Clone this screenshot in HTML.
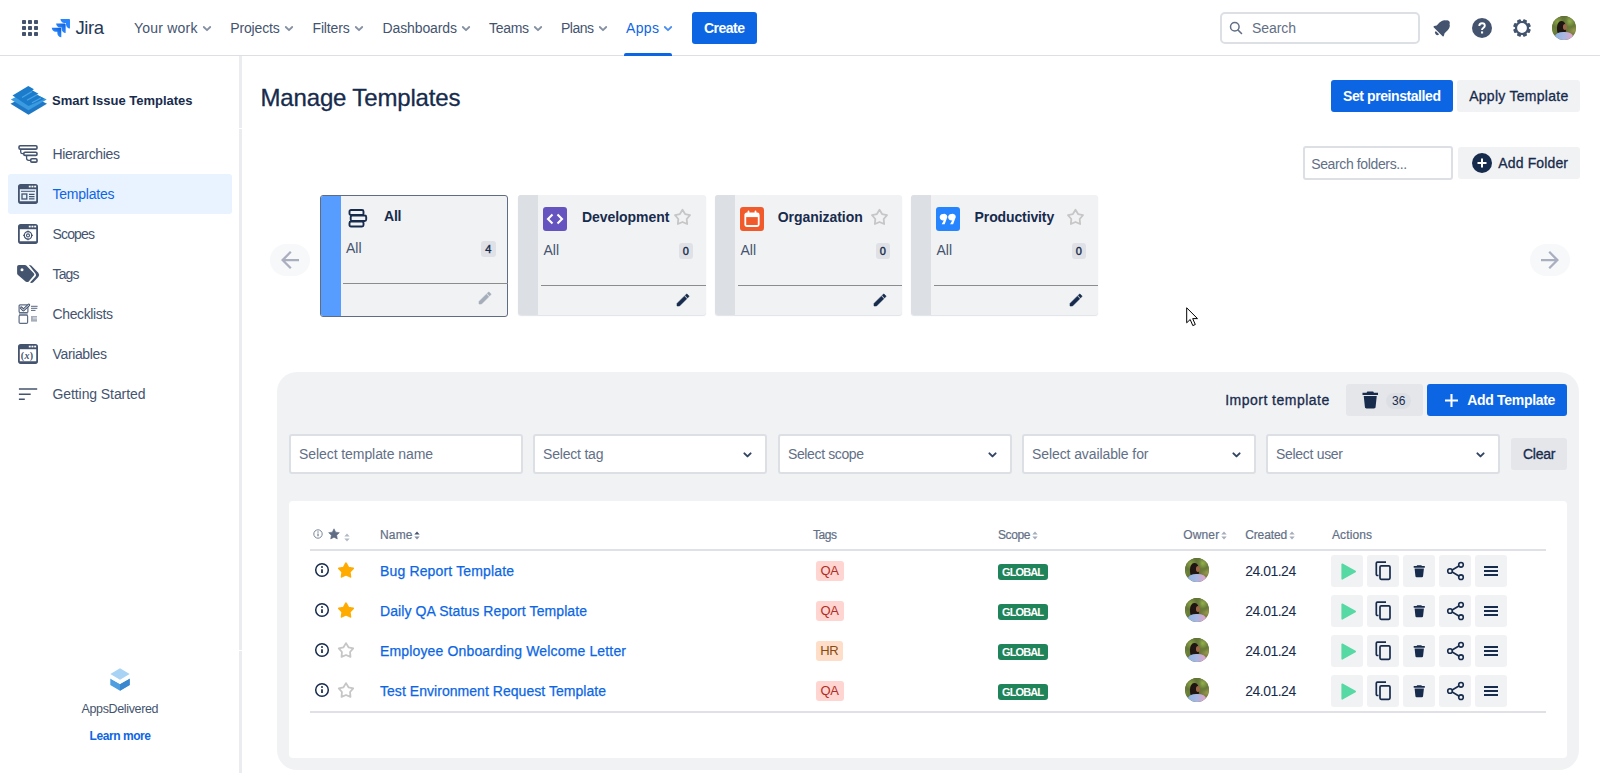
<!DOCTYPE html>
<html><head><meta charset="utf-8"><title>Manage Templates - Jira</title><style>
*{box-sizing:border-box;margin:0;padding:0}
html,body{width:1600px;height:773px;overflow:hidden;background:#fff}
body{font-family:"Liberation Sans",sans-serif;color:#172b4d;font-size:14px;position:relative}
.a{position:absolute}
.t{position:absolute;white-space:nowrap}
svg{position:absolute;overflow:visible}
#topnav{position:absolute;left:0;top:0;width:1600px;height:56px;border-bottom:1px solid #dcdfe4;background:#fff}
#sbline{position:absolute;left:239px;top:56px;width:3px;height:717px;background:#ebecf0}
#sel{position:absolute;left:8px;top:174px;width:224px;height:40px;background:#e9f2ff;border-radius:3px}
</style></head><body>
<div id="topnav"></div><svg style="left:22px;top:20px" width="16" height="16" viewBox="0 0 16 16"><rect x="0" y="0" width="4" height="4" rx="0.8" fill="#44546f"/><rect x="6" y="0" width="4" height="4" rx="0.8" fill="#44546f"/><rect x="12" y="0" width="4" height="4" rx="0.8" fill="#44546f"/><rect x="0" y="6" width="4" height="4" rx="0.8" fill="#44546f"/><rect x="6" y="6" width="4" height="4" rx="0.8" fill="#44546f"/><rect x="12" y="6" width="4" height="4" rx="0.8" fill="#44546f"/><rect x="0" y="12" width="4" height="4" rx="0.8" fill="#44546f"/><rect x="6" y="12" width="4" height="4" rx="0.8" fill="#44546f"/><rect x="12" y="12" width="4" height="4" rx="0.8" fill="#44546f"/></svg><svg style="left:51.200px;top:16.700px" width="20.800" height="20.800" viewBox="0 0 32 32"><defs><linearGradient id="jg" x1="1" y1="0" x2="0.400" y2="0.700"><stop offset="0.100" stop-color="#0f5fd6"/><stop offset="0.800" stop-color="#2684ff"/></linearGradient></defs>
<path d="M28.03 3.2H14.55c0 3.36 2.72 6.08 6.08 6.08h2.48v2.4c0 3.36 2.72 6.08 6.08 6.08V4.36c0-.64-.52-1.16-1.16-1.16z" fill="#2684ff"/>
<path d="M21.36 9.92H7.88c0 3.36 2.72 6.08 6.08 6.08h2.48v2.4c0 3.36 2.72 6.08 6.08 6.08V11.08c0-.64-.52-1.16-1.16-1.16z" fill="url(#jg)"/>
<path d="M14.68 16.63H1.2c0 3.36 2.72 6.08 6.08 6.08h2.49v2.4c0 3.35 2.72 6.07 6.07 6.08V17.79c0-.64-.52-1.16-1.16-1.16z" fill="url(#jg)"/></svg><div class="t" style="left:75.5px;top:15px;font-size:18.5px;line-height:25px;font-weight:normal;color:#253858;letter-spacing:-0.438px;">Jira</div><div class="t" style="left:134px;top:18px;font-size:14px;line-height:20px;font-weight:normal;color:#44546f;letter-spacing:0.219px;">Your work</div><svg style="left:202.5px;top:25.5px" width="8" height="6" viewBox="0 0 8 6"><path d="M0.8 1 L4 4.2 L7.2 1" fill="none" stroke="#8590a2" stroke-width="1.8" stroke-linecap="round" stroke-linejoin="round"/></svg><div class="t" style="left:230.3px;top:18px;font-size:14px;line-height:20px;font-weight:normal;color:#44546f;letter-spacing:-0.154px;">Projects</div><svg style="left:284.8px;top:25.5px" width="8" height="6" viewBox="0 0 8 6"><path d="M0.8 1 L4 4.2 L7.2 1" fill="none" stroke="#8590a2" stroke-width="1.8" stroke-linecap="round" stroke-linejoin="round"/></svg><div class="t" style="left:312.5px;top:18px;font-size:14px;line-height:20px;font-weight:normal;color:#44546f;letter-spacing:-0.154px;">Filters</div><svg style="left:354.7px;top:25.5px" width="8" height="6" viewBox="0 0 8 6"><path d="M0.8 1 L4 4.2 L7.2 1" fill="none" stroke="#8590a2" stroke-width="1.8" stroke-linecap="round" stroke-linejoin="round"/></svg><div class="t" style="left:382.5px;top:18px;font-size:14px;line-height:20px;font-weight:normal;color:#44546f;letter-spacing:-0.111px;">Dashboards</div><svg style="left:462.0px;top:25.5px" width="8" height="6" viewBox="0 0 8 6"><path d="M0.8 1 L4 4.2 L7.2 1" fill="none" stroke="#8590a2" stroke-width="1.8" stroke-linecap="round" stroke-linejoin="round"/></svg><div class="t" style="left:489px;top:18px;font-size:14px;line-height:20px;font-weight:normal;color:#44546f;letter-spacing:-0.309px;">Teams</div><svg style="left:534px;top:25.5px" width="8" height="6" viewBox="0 0 8 6"><path d="M0.8 1 L4 4.2 L7.2 1" fill="none" stroke="#8590a2" stroke-width="1.8" stroke-linecap="round" stroke-linejoin="round"/></svg><div class="t" style="left:561px;top:18px;font-size:14px;line-height:20px;font-weight:normal;color:#44546f;letter-spacing:-0.508px;">Plans</div><svg style="left:599px;top:25.5px" width="8" height="6" viewBox="0 0 8 6"><path d="M0.8 1 L4 4.2 L7.2 1" fill="none" stroke="#8590a2" stroke-width="1.8" stroke-linecap="round" stroke-linejoin="round"/></svg><div class="t" style="left:626px;top:18px;font-size:14px;line-height:20px;font-weight:normal;color:#0c66e4;letter-spacing:0.359px;">Apps</div><svg style="left:664px;top:25.5px" width="8" height="6" viewBox="0 0 8 6"><path d="M0.8 1 L4 4.2 L7.2 1" fill="none" stroke="#4c8ff0" stroke-width="1.8" stroke-linecap="round" stroke-linejoin="round"/></svg><div class="a" style="left:624px;top:53px;width:48px;height:3px;background:#0c66e4;border-radius:2px 2px 0 0"></div><div class="a" style="left:692px;top:12px;width:65px;height:32px;background:#0c66e4;border-radius:3px"></div><div class="t" style="left:704px;top:18px;font-size:14px;line-height:20px;font-weight:bold;color:#fff;letter-spacing:-0.519px;">Create</div><div class="a" style="left:1220px;top:12px;width:200px;height:32px;border:2px solid #dcdfe4;border-radius:5px;background:#fff"></div><svg style="left:1229px;top:21px" width="14" height="14" viewBox="0 0 14 14"><circle cx="5.8" cy="5.8" r="4.3" fill="none" stroke="#626f86" stroke-width="1.5"/><path d="M9 9 L12.5 12.5" stroke="#626f86" stroke-width="1.6" stroke-linecap="round"/></svg><div class="t" style="left:1252px;top:18px;font-size:14px;line-height:20px;font-weight:normal;color:#626f86;letter-spacing:-0.072px;">Search</div><svg style="left:1432px;top:18px" width="20" height="20" viewBox="-10 -10 20 20"><g transform="translate(0.4 -0.4) rotate(45)" fill="#44546f"><path d="M0 -9.300C-1.300 -9.300 -2.200 -8.600 -2.500 -7.600C-4.700 -6.600 -5.600 -4.300 -5.600 -1.500V2.500L-6.900 4.800C-7.200 5.400 -6.900 5.900 -6.200 5.900H6.200C6.900 5.900 7.200 5.400 6.900 4.800L5.600 2.500V-1.500C5.600 -4.300 4.700 -6.600 2.500 -7.600C2.200 -8.600 1.300 -9.300 0 -9.300Z"/><path d="M-2.400 7.100H2.400A2.400 2.400 0 0 1 -2.400 7.100Z"/></g></svg><div class="a" style="left:1472px;top:18px;width:20px;height:20px;border-radius:50%;background:#44546f"></div><svg style="left:1472px;top:18px" width="20" height="20" viewBox="0 0 20 20"><path d="M7.300 8.100C7.300 6.300 8.500 5.300 10.100 5.300C11.700 5.300 12.800 6.300 12.800 7.700C12.800 9.700 10 9.700 10 12.100" fill="none" stroke="#fff" stroke-width="1.900"/><rect x="9" y="13.400" width="2.100" height="2.100" fill="#fff"/></svg><svg style="left:1511.600px;top:17.600px" width="20" height="20" viewBox="-10 -10 20 20"><circle r="6" fill="none" stroke="#44546f" stroke-width="2.200"/><rect x="-2" y="-8.900" width="4" height="3.400" rx="0.800" transform="rotate(22.5)" fill="#44546f"/><rect x="-2" y="-8.900" width="4" height="3.400" rx="0.800" transform="rotate(67.5)" fill="#44546f"/><rect x="-2" y="-8.900" width="4" height="3.400" rx="0.800" transform="rotate(112.5)" fill="#44546f"/><rect x="-2" y="-8.900" width="4" height="3.400" rx="0.800" transform="rotate(157.5)" fill="#44546f"/><rect x="-2" y="-8.900" width="4" height="3.400" rx="0.800" transform="rotate(202.5)" fill="#44546f"/><rect x="-2" y="-8.900" width="4" height="3.400" rx="0.800" transform="rotate(247.5)" fill="#44546f"/><rect x="-2" y="-8.900" width="4" height="3.400" rx="0.800" transform="rotate(292.5)" fill="#44546f"/><rect x="-2" y="-8.900" width="4" height="3.400" rx="0.800" transform="rotate(337.5)" fill="#44546f"/></svg><div class="a" style="left:1552px;top:16px;width:24px;height:24px;border-radius:50%;overflow:hidden;background:#626b38">
<div class="a" style="left:0;top:0;width:100%;height:100%;background:radial-gradient(circle at 24% 24%,#8aa544 0,#66783a 22%,transparent 42%),radial-gradient(circle at 74% 22%,#93b04c 0,#667a38 22%,transparent 42%),radial-gradient(circle at 90% 56%,#a3a24e 0,transparent 30%),radial-gradient(circle at 8% 58%,#6f8c3a 0,transparent 28%),radial-gradient(circle at 50% 6%,#3f4727 0,transparent 26%)"></div>
<div class="a" style="left:21%;top:22%;width:38%;height:60%;border-radius:45%;background:#1f1513"></div>
<div class="a" style="left:46%;top:32%;width:18%;height:25%;border-radius:50%;background:#9a664a"></div>
<div class="a" style="left:12%;top:68%;width:76%;height:40%;border-radius:45% 45% 0 0;background:linear-gradient(90deg,#8db4e6 0,#a9b6e2 50%,#dca6cd 90%)"></div>
</div><div id="sbline"></div><div class="a" style="left:239px;top:128px;width:3px;height:1px;background:#fff"></div><div class="a" style="left:239px;top:650px;width:3px;height:1px;background:#fff"></div><div id="sel"></div><svg style="left:10px;top:85px" width="38" height="31" viewBox="0 0 38 31">
<path d="M0.500 18.800L18.500 9.500L37 18.800L18.500 29.700Z" fill="#1f78c6"/>
<path d="M0.800 14.600L18.500 5.500L36.700 14.600L18.500 25.300Z" fill="#3a9be0"/>
<path d="M2.500 10.500L18.300 1.100L24 4.300L22.200 5.300L28.500 8.700L26.700 9.700L34.500 13.700L33 14.600L18.500 21Z" fill="#1c7ccc"/>
<path d="M12 12.500L22 6.500M17 15.200L27 9.800M22 17.800L31 13" stroke="#4aa3e6" stroke-width="1.300" fill="none"/>
</svg><div class="t" style="left:52px;top:91px;font-size:13px;line-height:19px;font-weight:bold;color:#172b4d;letter-spacing:-0.008px;">Smart Issue Templates</div><svg style="left:18px;top:144px" width="20" height="20" viewBox="0 0 20 20" fill="none" stroke="#44546f" stroke-width="1.600">
<rect x="1" y="1.700" width="18" height="3.400" rx="1.200"/><rect x="5.800" y="8.200" width="13.200" height="3.200" rx="1.200"/><rect x="12.700" y="14.700" width="6.300" height="3.400" rx="1.200"/>
<path d="M2.700 5.500V8Q2.700 9.700 4.500 9.700H5.800M8.600 12V14.300Q8.600 16.300 10.800 16.300H12.700" stroke-width="1.300"/></svg><svg style="left:18px;top:184px" width="20" height="20" viewBox="0 0 20 20"><rect x="0.900" y="0.900" width="18.200" height="18.200" rx="1.800" fill="none" stroke="#44546f" stroke-width="1.800"/><rect x="0.900" y="0.900" width="18.200" height="4.300" fill="#44546f"/><rect x="0.900" y="17.300" width="18.200" height="2" rx="0.800" fill="#44546f"/><rect x="10.800" y="1.700" width="1.900" height="1.700" fill="#fff"/><rect x="13.500" y="1.700" width="1.900" height="1.700" fill="#fff"/><rect x="16.200" y="1.700" width="1.900" height="1.700" fill="#fff"/><path d="M3 7.300H17" stroke="#44546f" stroke-width="1"/><rect x="4" y="10" width="4.800" height="5" fill="none" stroke="#44546f" stroke-width="1.300"/><path d="M11 10.300H16.500M11 12.600H16.500M11 14.900H16.500" stroke="#44546f" stroke-width="1.200"/></svg><svg style="left:18px;top:224px" width="20" height="20" viewBox="0 0 20 20"><rect x="0.900" y="0.900" width="18.200" height="18.200" rx="1.800" fill="none" stroke="#44546f" stroke-width="1.800"/><rect x="0.900" y="0.900" width="18.200" height="4.300" fill="#44546f"/><rect x="0.900" y="17.300" width="18.200" height="2" rx="0.800" fill="#44546f"/><rect x="10.800" y="1.700" width="1.900" height="1.700" fill="#fff"/><rect x="13.500" y="1.700" width="1.900" height="1.700" fill="#fff"/><rect x="16.200" y="1.700" width="1.900" height="1.700" fill="#fff"/><circle cx="10" cy="11.400" r="3.700" fill="none" stroke="#44546f" stroke-width="1.200"/><circle cx="10" cy="11.400" r="1.500" fill="none" stroke="#44546f" stroke-width="1.100"/><path d="M10 6.600V8.200M10 14.600V16.200M5.200 11.400H6.800M13.200 11.400H14.800" stroke="#44546f" stroke-width="1.100"/></svg><svg style="left:16px;top:264px" width="24" height="20" viewBox="0 0 24 20"><path d="M12.800 0.800L15.200 1.500L22.300 8.800Q24 10.900 22.300 13L17.300 18.200Q15.800 19.600 14 18.500L19.500 12.400Q20.700 11 19.500 9.600Z" fill="#44546f"/><polygon points="2.900,2.700 9,2.700 16.500,10.400 11.400,16.200 10.700,16.200 2.900,9.300" fill="#44546f" stroke="#44546f" stroke-width="3.600" stroke-linejoin="round"/><circle cx="6" cy="5.700" r="1.500" fill="#fff"/></svg><svg style="left:18px;top:304px" width="20" height="20" viewBox="0 0 20 20" fill="none"><rect x="1" y="8.500" width="8.700" height="2.600" fill="#a5adba"/><rect x="1.100" y="0.900" width="8.800" height="7.600" rx="1" stroke="#5e6c84" stroke-width="1.200"/><rect x="1.100" y="11.100" width="8.500" height="8.300" rx="1.200" stroke="#5e6c84" stroke-width="1.200"/><path d="M3.200 3.800L5.400 6L10.800 1" stroke="#44546f" stroke-width="2.800" stroke-linecap="round" stroke-linejoin="round"/><path d="M3.200 3.800L5.400 6L10.800 1" stroke="#fff" stroke-width="0.900" stroke-linecap="round" stroke-linejoin="round"/><path d="M13 2.300H19.600M13 4.300H19.300M13 6.400H17.500" stroke="#44546f" stroke-width="0.900"/><rect x="13" y="12" width="6" height="5.600" fill="#a5adba"/><rect x="14.800" y="13" width="4.200" height="2.400" fill="#c7ccd5"/></svg><svg style="left:18px;top:344px" width="20" height="20" viewBox="0 0 20 20"><rect x="0.900" y="0.900" width="18.200" height="18.200" rx="1.800" fill="none" stroke="#44546f" stroke-width="1.800"/><rect x="0.900" y="0.900" width="18.200" height="4.300" fill="#44546f"/><rect x="0.900" y="17.300" width="18.200" height="2" rx="0.800" fill="#44546f"/><rect x="10.800" y="1.700" width="1.900" height="1.700" fill="#fff"/><rect x="13.500" y="1.700" width="1.900" height="1.700" fill="#fff"/><rect x="16.200" y="1.700" width="1.900" height="1.700" fill="#fff"/></svg><div class="t" style="left:20.8px;top:348px;font-size:10px;line-height:15px;font-weight:bold;color:#44546f;letter-spacing:0.25px;font-family:'Liberation Serif',serif;">(<i>x</i>)</div><svg style="left:18px;top:384px" width="20" height="20" viewBox="0 0 20 20"><path d="M0.900 5H19.200M0.900 10.300H12.700M0.900 15.300H6.800" stroke="#44546f" stroke-width="1.600"/></svg><div class="t" style="left:52.5px;top:144px;font-size:14px;line-height:20px;font-weight:normal;color:#44546f;letter-spacing:-0.331px;">Hierarchies</div><div class="t" style="left:52.5px;top:184px;font-size:14px;line-height:20px;font-weight:normal;color:#0c66e4;letter-spacing:-0.227px;">Templates</div><div class="t" style="left:52.5px;top:224px;font-size:14px;line-height:20px;font-weight:normal;color:#44546f;letter-spacing:-0.841px;">Scopes</div><div class="t" style="left:52.5px;top:264px;font-size:14px;line-height:20px;font-weight:normal;color:#44546f;letter-spacing:-0.859px;">Tags</div><div class="t" style="left:52.5px;top:304px;font-size:14px;line-height:20px;font-weight:normal;color:#44546f;letter-spacing:-0.366px;">Checklists</div><div class="t" style="left:52.5px;top:344px;font-size:14px;line-height:20px;font-weight:normal;color:#44546f;letter-spacing:-0.354px;">Variables</div><div class="t" style="left:52.5px;top:384px;font-size:14px;line-height:20px;font-weight:normal;color:#44546f;letter-spacing:-0.084px;">Getting Started</div><svg style="left:110px;top:668px" width="20" height="23" viewBox="0 0 20 23"><path d="M0.300 6L10 0.300L19.700 6L10 11.700Z" fill="#a9d3f5"/><path d="M0.300 10.500L10 16L19.700 10.500V17L10 22.700L0.300 17Z" fill="#4f9fe0"/><path d="M10 16L19.700 10.500V17L10 22.700Z" fill="#3a86cf"/><path d="M0.300 8.200L10 13.800L19.700 8.200V10.500L10 16L0.300 10.500Z" fill="#fff"/></svg><div class="t" style="left:81.5px;top:700px;font-size:12.5px;line-height:18px;font-weight:normal;color:#44546f;letter-spacing:-0.358px;">AppsDelivered</div><div class="t" style="left:89.5px;top:727px;font-size:12px;line-height:18px;font-weight:bold;color:#0c66e4;letter-spacing:-0.429px;">Learn more</div><div class="t" style="left:260.5px;top:82px;font-size:24px;line-height:31px;font-weight:normal;color:#172b4d;letter-spacing:-0.157px;-webkit-text-stroke:0.300px #172b4d;">Manage Templates</div><div class="a" style="left:1331px;top:80px;width:122px;height:32px;background:#0c66e4;border-radius:3px"></div><div class="t" style="left:1343px;top:86px;font-size:14px;line-height:20px;font-weight:bold;color:#fff;letter-spacing:-0.418px;">Set preinstalled</div><div class="a" style="left:1457px;top:80px;width:123px;height:32px;background:#f1f2f4;border-radius:3px"></div><div class="t" style="left:1469.2px;top:86px;font-size:14px;line-height:20px;font-weight:normal;color:#172b4d;letter-spacing:0.272px;-webkit-text-stroke:0.300px #172b4d;">Apply Template</div><div class="a" style="left:1303px;top:146px;width:150px;height:34px;border:2px solid #dcdfe4;border-radius:3px;background:#fff"></div><div class="t" style="left:1311.2px;top:154px;font-size:14px;line-height:20px;font-weight:normal;color:#626f86;letter-spacing:-0.371px;">Search folders...</div><div class="a" style="left:1458px;top:147px;width:122px;height:32px;background:#f1f2f4;border-radius:3px"></div><svg style="left:1471.800px;top:153px" width="20" height="20" viewBox="0 0 20 20"><circle cx="10" cy="10" r="10" fill="#172b4d"/><path d="M10 5.500V14.500M5.500 10H14.500" stroke="#fff" stroke-width="2"/></svg><div class="t" style="left:1498.3px;top:153px;font-size:14px;line-height:20px;font-weight:normal;color:#172b4d;letter-spacing:0.135px;-webkit-text-stroke:0.300px #172b4d;">Add Folder</div><div class="a" style="left:270px;top:244px;width:40px;height:32px;border-radius:16px;background:#f7f8f9"></div><svg style="left:281px;top:251px" width="18" height="18" viewBox="4 4 16 16"><path d="M20 11H7.830l5.590-5.590L12 4l-8 8 8 8 1.410-1.410L7.830 13H20v-2z" fill="#a9afbf"/></svg><div class="a" style="left:1530px;top:244px;width:40px;height:32px;border-radius:16px;background:#f7f8f9"></div><svg style="left:1541px;top:251px" width="18" height="18" viewBox="4 4 16 16"><path d="M12 4l-1.410 1.410L16.170 11H4v2h12.170l-5.580 5.590L12 20l8-8z" fill="#a9afbf"/></svg><div class="a" style="left:320px;top:195px;width:188px;height:122px;background:#f1f2f4;border:1px solid #5e6c84;border-radius:3px;overflow:hidden"><div class="a" style="left:0;top:0;width:20px;height:100%;background:#579dff"></div></div><svg style="left:348px;top:208.500px" width="20" height="19" viewBox="0 0 20 19" fill="none" stroke="#172b4d" stroke-width="1.900"><rect x="1.500" y="1" width="14" height="5" rx="1.500"/><rect x="2.700" y="6.500" width="15.500" height="5.500" rx="1.500"/><rect x="1.500" y="12.500" width="14" height="5" rx="1.500"/></svg><div class="t" style="left:384px;top:206px;font-size:14px;line-height:20px;font-weight:bold;color:#172b4d;letter-spacing:-0.195px;">All</div><div class="t" style="left:346px;top:238px;font-size:14px;line-height:20px;font-weight:normal;color:#44546f;letter-spacing:-0.031px;">All</div><div class="a" style="left:481px;top:241px;width:15px;height:15.500px;background:#dfe1e6;border-radius:3px"></div><div class="t" style="left:485.3px;top:241px;font-size:11px;line-height:16px;font-weight:normal;color:#172b4d;letter-spacing:0px;-webkit-text-stroke:0.400px #172b4d;">4</div><div class="a" style="left:343px;top:283.300px;width:165px;height:1px;background:#8c8c8c"></div><svg style="left:479.3px;top:292px" width="12" height="12" viewBox="3 3 18 18"><path d="M3 17.250V21h3.750L17.810 9.940l-3.750-3.750L3 17.250zM20.710 7.040c.390-.390.390-1.020 0-1.410l-2.340-2.340c-.390-.390-1.020-.390-1.410 0L15.130 5.120l3.750 3.750 1.830-1.830z" fill="#a5adba" stroke="#a5adba" stroke-width="0.800"/></svg><div class="a" style="left:518px;top:195px;width:187.5px;height:120px;background:#f1f2f4;border-radius:3px;box-shadow:0 1px 1px rgba(9,30,66,0.13);overflow:hidden"><div class="a" style="left:0;top:0;width:20px;height:100%;background:#dcdfe4"></div></div><div class="a" style="left:543px;top:206.700px;width:24px;height:24px;background:#6554c0;border-radius:3px"></div><svg style="left:543px;top:206.700px" width="24" height="24" viewBox="0 0 24 24"><path d="M9.500 7.500L5 12L9.500 16.500M14.500 7.500L19 12L14.500 16.500" fill="none" stroke="#fff" stroke-width="2.100"/></svg><div class="t" style="left:582px;top:207px;font-size:14px;line-height:20px;font-weight:bold;color:#172b4d;letter-spacing:-0.062px;">Development</div><svg style="left:674.4px;top:208.300px" width="18" height="18" viewBox="0 0 18 18"><polygon points="8.50,1.70 11.10,6.02 16.01,7.16 12.71,10.97 13.14,15.99 8.50,14.02 3.86,15.99 4.29,10.97 0.99,7.16 5.90,6.02" fill="none" stroke="#c6c6c6" stroke-width="1.8" stroke-linejoin="round"/></svg><div class="t" style="left:543.5px;top:240px;font-size:14px;line-height:20px;font-weight:normal;color:#44546f;letter-spacing:-0.031px;">All</div><div class="a" style="left:679px;top:243px;width:14px;height:15.500px;background:#dfe1e6;border-radius:3px"></div><div class="t" style="left:682.8px;top:243px;font-size:11px;line-height:16px;font-weight:normal;color:#172b4d;letter-spacing:0px;-webkit-text-stroke:0.400px #172b4d;">0</div><div class="a" style="left:541px;top:285px;width:164.5px;height:1px;background:#8c8c8c"></div><svg style="left:676.9px;top:294.3px" width="12" height="12" viewBox="3 3 18 18"><path d="M3 17.250V21h3.750L17.810 9.940l-3.750-3.750L3 17.250zM20.710 7.040c.390-.390.390-1.020 0-1.410l-2.340-2.340c-.390-.390-1.020-.390-1.410 0L15.130 5.120l3.750 3.750 1.830-1.830z" fill="#172b4d" stroke="#172b4d" stroke-width="0.800"/></svg><div class="a" style="left:715px;top:195px;width:186.5px;height:120px;background:#f1f2f4;border-radius:3px;box-shadow:0 1px 1px rgba(9,30,66,0.13);overflow:hidden"><div class="a" style="left:0;top:0;width:20px;height:100%;background:#dcdfe4"></div></div><div class="a" style="left:740px;top:206.700px;width:24px;height:24px;background:#f15a2b;border-radius:3px"></div><svg style="left:740px;top:206.700px" width="24" height="24" viewBox="0 0 24 24"><rect x="5.300" y="6.500" width="13.400" height="12.500" rx="1.500" fill="none" stroke="#fff" stroke-width="1.800"/><rect x="5.300" y="6.500" width="13.400" height="3.600" fill="#fff"/><path d="M8.500 4.500V7M15.500 4.500V7" stroke="#fff" stroke-width="1.800" stroke-linecap="round"/></svg><div class="t" style="left:777.7px;top:207px;font-size:14px;line-height:20px;font-weight:bold;color:#172b4d;letter-spacing:-0.051px;">Organization</div><svg style="left:870.5px;top:208.300px" width="18" height="18" viewBox="0 0 18 18"><polygon points="8.50,1.70 11.10,6.02 16.01,7.16 12.71,10.97 13.14,15.99 8.50,14.02 3.86,15.99 4.29,10.97 0.99,7.16 5.90,6.02" fill="none" stroke="#c6c6c6" stroke-width="1.8" stroke-linejoin="round"/></svg><div class="t" style="left:740.5px;top:240px;font-size:14px;line-height:20px;font-weight:normal;color:#44546f;letter-spacing:-0.031px;">All</div><div class="a" style="left:876px;top:243px;width:14px;height:15.500px;background:#dfe1e6;border-radius:3px"></div><div class="t" style="left:879.8px;top:243px;font-size:11px;line-height:16px;font-weight:normal;color:#172b4d;letter-spacing:0px;-webkit-text-stroke:0.400px #172b4d;">0</div><div class="a" style="left:738px;top:285px;width:163.5px;height:1px;background:#8c8c8c"></div><svg style="left:873.9px;top:294.3px" width="12" height="12" viewBox="3 3 18 18"><path d="M3 17.250V21h3.750L17.810 9.940l-3.750-3.750L3 17.250zM20.710 7.040c.390-.390.390-1.020 0-1.410l-2.340-2.340c-.390-.390-1.020-.390-1.410 0L15.130 5.120l3.750 3.750 1.830-1.830z" fill="#172b4d" stroke="#172b4d" stroke-width="0.800"/></svg><div class="a" style="left:911px;top:195px;width:186.5px;height:120px;background:#f1f2f4;border-radius:3px;box-shadow:0 1px 1px rgba(9,30,66,0.13);overflow:hidden"><div class="a" style="left:0;top:0;width:20px;height:100%;background:#dcdfe4"></div></div><div class="a" style="left:936px;top:206.700px;width:24px;height:24px;background:#2684ff;border-radius:3px"></div><svg style="left:936px;top:206.700px" width="24" height="24" viewBox="0 0 24 24" fill="#fff"><g transform="translate(12.300 12.200) scale(0.860) translate(-13.700 -12)"><path d="M7.500 6A3.700 3.700 0 1 0 8.600 13.200L6 18H9.500L11.600 12.200A3.800 3.800 0 0 0 7.500 6Z"/><path d="M17.300 6A3.700 3.700 0 1 0 18.400 13.200L15.800 18H19.300L21.400 12.200A3.800 3.800 0 0 0 17.300 6Z"/></g></svg><div class="t" style="left:974.6px;top:207px;font-size:14px;line-height:20px;font-weight:bold;color:#172b4d;letter-spacing:-0.119px;">Productivity</div><svg style="left:1066.6px;top:208.300px" width="18" height="18" viewBox="0 0 18 18"><polygon points="8.50,1.70 11.10,6.02 16.01,7.16 12.71,10.97 13.14,15.99 8.50,14.02 3.86,15.99 4.29,10.97 0.99,7.16 5.90,6.02" fill="none" stroke="#c6c6c6" stroke-width="1.8" stroke-linejoin="round"/></svg><div class="t" style="left:936.5px;top:240px;font-size:14px;line-height:20px;font-weight:normal;color:#44546f;letter-spacing:-0.031px;">All</div><div class="a" style="left:1072px;top:243px;width:14px;height:15.500px;background:#dfe1e6;border-radius:3px"></div><div class="t" style="left:1075.8px;top:243px;font-size:11px;line-height:16px;font-weight:normal;color:#172b4d;letter-spacing:0px;-webkit-text-stroke:0.400px #172b4d;">0</div><div class="a" style="left:934px;top:285px;width:163.5px;height:1px;background:#8c8c8c"></div><svg style="left:1069.9px;top:294.3px" width="12" height="12" viewBox="3 3 18 18"><path d="M3 17.250V21h3.750L17.810 9.940l-3.750-3.750L3 17.250zM20.710 7.040c.390-.390.390-1.020 0-1.410l-2.340-2.340c-.390-.390-1.020-.390-1.410 0L15.130 5.120l3.750 3.750 1.830-1.830z" fill="#172b4d" stroke="#172b4d" stroke-width="0.800"/></svg><svg style="left:1186px;top:307px" width="13" height="20" viewBox="0 0 13 20"><path d="M0.700 0.800V15.800L4.200 12.500L6.800 18.600L9.300 17.500L6.700 11.600H11.500Z" fill="#fff" stroke="#000" stroke-width="1"/></svg><div class="a" style="left:277px;top:372px;width:1302px;height:398px;background:#f1f2f4;border-radius:20px"></div><div class="t" style="left:1225.2px;top:390px;font-size:14px;line-height:20px;font-weight:normal;color:#172b4d;letter-spacing:0.481px;-webkit-text-stroke:0.300px #172b4d;">Import template</div><div class="a" style="left:1346px;top:384px;width:77px;height:32px;background:#e4e6ea;border-radius:3px"></div><svg style="left:1362px;top:391px" width="16.5" height="18" viewBox="0 0 17 18"><path d="M5.500 0.300H11.500L12.300 1.600H16.500V3.800H0.500V1.600H4.700Z" fill="#172b4d"/><path d="M1.800 5H15.200L14 16.300C13.900 17.300 13.300 17.800 12.300 17.800H4.700C3.700 17.800 3.100 17.300 3 16.300Z" fill="#172b4d"/></svg><div class="a" style="left:1386.400px;top:392.500px;width:24.300px;height:16px;background:#dcdfe4;border-radius:8px"></div><div class="t" style="left:1392px;top:392px;font-size:12px;line-height:18px;font-weight:normal;color:#172b4d;letter-spacing:0.141px;">36</div><div class="a" style="left:1427px;top:384px;width:140px;height:32px;background:#0c66e4;border-radius:3px"></div><svg style="left:1444.500px;top:393.500px" width="13" height="13" viewBox="0 0 13 13"><path d="M6.500 0V13M0 6.500H13" stroke="#fff" stroke-width="2.100"/></svg><div class="t" style="left:1467.3px;top:390px;font-size:14px;line-height:20px;font-weight:bold;color:#fff;letter-spacing:-0.321px;">Add Template</div><div class="a" style="left:289px;top:434px;width:234px;height:40px;border:2px solid #dcdfe4;border-radius:3px;background:#fff"></div><div class="t" style="left:299px;top:444px;font-size:14px;line-height:20px;font-weight:normal;color:#626f86;letter-spacing:-0.074px;">Select template name</div><div class="a" style="left:533px;top:434px;width:234px;height:40px;border:2px solid #dcdfe4;border-radius:3px;background:#fff"></div><div class="t" style="left:543px;top:444px;font-size:14px;line-height:20px;font-weight:normal;color:#626f86;letter-spacing:-0.196px;">Select tag</div><svg style="left:743.2px;top:451.500px" width="9" height="7" viewBox="0 0 9 7"><path d="M1.400 1.400L4.500 4.400L7.600 1.400" fill="none" stroke="#344563" stroke-width="2" stroke-linecap="round" stroke-linejoin="round"/></svg><div class="a" style="left:778px;top:434px;width:234px;height:40px;border:2px solid #dcdfe4;border-radius:3px;background:#fff"></div><div class="t" style="left:788px;top:444px;font-size:14px;line-height:20px;font-weight:normal;color:#626f86;letter-spacing:-0.379px;">Select scope</div><svg style="left:988.2px;top:451.500px" width="9" height="7" viewBox="0 0 9 7"><path d="M1.400 1.400L4.500 4.400L7.600 1.400" fill="none" stroke="#344563" stroke-width="2" stroke-linecap="round" stroke-linejoin="round"/></svg><div class="a" style="left:1022px;top:434px;width:234px;height:40px;border:2px solid #dcdfe4;border-radius:3px;background:#fff"></div><div class="t" style="left:1032px;top:444px;font-size:14px;line-height:20px;font-weight:normal;color:#626f86;letter-spacing:-0.095px;">Select available for</div><svg style="left:1232.2px;top:451.500px" width="9" height="7" viewBox="0 0 9 7"><path d="M1.400 1.400L4.500 4.400L7.600 1.400" fill="none" stroke="#344563" stroke-width="2" stroke-linecap="round" stroke-linejoin="round"/></svg><div class="a" style="left:1266px;top:434px;width:234px;height:40px;border:2px solid #dcdfe4;border-radius:3px;background:#fff"></div><div class="t" style="left:1276px;top:444px;font-size:14px;line-height:20px;font-weight:normal;color:#626f86;letter-spacing:-0.305px;">Select user</div><svg style="left:1476.2px;top:451.500px" width="9" height="7" viewBox="0 0 9 7"><path d="M1.400 1.400L4.500 4.400L7.600 1.400" fill="none" stroke="#344563" stroke-width="2" stroke-linecap="round" stroke-linejoin="round"/></svg><div class="a" style="left:1511px;top:438px;width:56px;height:32px;background:#e4e6ea;border-radius:3px"></div><div class="t" style="left:1523px;top:444px;font-size:14px;line-height:20px;font-weight:normal;color:#172b4d;letter-spacing:-0.242px;-webkit-text-stroke:0.300px #172b4d;">Clear</div><div class="a" style="left:289px;top:501px;width:1278px;height:257px;background:#fff;border-radius:4px"></div><div class="a" style="left:310px;top:548.700px;width:1236px;height:2px;background:#dfe1e6"></div><div class="a" style="left:310px;top:711px;width:1236px;height:2px;background:#dfe1e6"></div><svg style="left:313px;top:529px" width="10" height="10" viewBox="0 0 10 10"><circle cx="5" cy="5" r="4.200" fill="none" stroke="#7a869a" stroke-width="1"/><path d="M5 4.600V7.300" stroke="#7a869a" stroke-width="1.300"/><circle cx="5" cy="3" r="0.750" fill="#7a869a"/></svg><svg style="left:328px;top:528px" width="12" height="12" viewBox="0 0 12 12"><polygon points="6.00,0.80 7.65,4.13 11.33,4.67 8.66,7.27 9.29,10.93 6.00,9.20 2.71,10.93 3.34,7.27 0.67,4.67 4.35,4.13" fill="#5e6c84" stroke="#5e6c84" stroke-width="0.6" stroke-linejoin="round"/></svg><svg style="left:344px;top:532.8px" width="6" height="9" viewBox="0 0 6 9"><path d="M0.300 3.500L3 0.400L5.700 3.500Z" fill="#b3b9c4"/><path d="M0.300 5.500L3 8.600L5.700 5.500Z" fill="#b3b9c4"/></svg><div class="t" style="left:380px;top:526px;font-size:12px;line-height:18px;font-weight:normal;color:#626f86;letter-spacing:0.161px;-webkit-text-stroke:0.200px #626f86;">Name</div><svg style="left:414.0px;top:531px" width="6" height="9" viewBox="0 0 6 9"><path d="M0.300 3.500L3 0.400L5.700 3.500Z" fill="#44546f"/><path d="M0.300 5.500L3 8.600L5.700 5.500Z" fill="#8590a2"/></svg><div class="t" style="left:813px;top:526px;font-size:12px;line-height:18px;font-weight:normal;color:#626f86;letter-spacing:-0.453px;-webkit-text-stroke:0.200px #626f86;">Tags</div><div class="t" style="left:998px;top:526px;font-size:12px;line-height:18px;font-weight:normal;color:#626f86;letter-spacing:-0.383px;-webkit-text-stroke:0.200px #626f86;">Scope</div><svg style="left:1032.0px;top:531px" width="6" height="9" viewBox="0 0 6 9"><path d="M0.300 3.500L3 0.400L5.700 3.500Z" fill="#a5adba"/><path d="M0.300 5.500L3 8.600L5.700 5.500Z" fill="#a5adba"/></svg><div class="t" style="left:1183.2px;top:526px;font-size:12px;line-height:18px;font-weight:normal;color:#626f86;letter-spacing:0.164px;-webkit-text-stroke:0.200px #626f86;">Owner</div><svg style="left:1220.7px;top:531px" width="6" height="9" viewBox="0 0 6 9"><path d="M0.300 3.500L3 0.400L5.700 3.500Z" fill="#a5adba"/><path d="M0.300 5.500L3 8.600L5.700 5.500Z" fill="#a5adba"/></svg><div class="t" style="left:1245.2px;top:526px;font-size:12px;line-height:18px;font-weight:normal;color:#626f86;letter-spacing:-0.117px;-webkit-text-stroke:0.200px #626f86;">Created</div><svg style="left:1288.7px;top:531px" width="6" height="9" viewBox="0 0 6 9"><path d="M0.300 3.500L3 0.400L5.700 3.500Z" fill="#a5adba"/><path d="M0.300 5.500L3 8.600L5.700 5.500Z" fill="#a5adba"/></svg><div class="t" style="left:1332px;top:526px;font-size:12px;line-height:18px;font-weight:normal;color:#626f86;letter-spacing:0.107px;-webkit-text-stroke:0.200px #626f86;">Actions</div><svg style="left:314px;top:562px" width="16" height="16" viewBox="0 0 16 16"><circle cx="8" cy="8" r="6.300" fill="none" stroke="#172b4d" stroke-width="1.500"/><path d="M8 7.300V11" stroke="#172b4d" stroke-width="1.700"/><circle cx="8" cy="5" r="1" fill="#172b4d"/></svg><svg style="left:337px;top:560.5px" width="18" height="18" viewBox="0 0 18 18"><polygon points="9.00,2.20 11.29,6.54 16.13,7.38 12.71,10.91 13.41,15.77 9.00,13.60 4.59,15.77 5.29,10.91 1.87,7.38 6.71,6.54" fill="#ffab00" stroke="#ffab00" stroke-width="1.8" stroke-linejoin="round"/></svg><div class="t" style="left:380px;top:561px;font-size:14px;line-height:20px;font-weight:normal;color:#0c66e4;letter-spacing:0.152px;-webkit-text-stroke:0.250px #0c66e4;">Bug Report Template</div><div class="a" style="left:816px;top:561px;width:27.7px;height:20px;background:#ffd5d2;border-radius:3px"></div><div class="t" style="left:820.4px;top:561px;font-size:13px;line-height:19px;font-weight:normal;color:#ae2e24;letter-spacing:-0.197px;">QA</div><div class="a" style="left:998px;top:564px;width:50px;height:16px;background:#1f845a;border-radius:3px"></div><div class="t" style="left:1002px;top:564px;font-size:11px;line-height:16px;font-weight:bold;color:#fff;letter-spacing:-0.891px;">GLOBAL</div><div class="a" style="left:1185px;top:558px;width:24px;height:24px;border-radius:50%;overflow:hidden;background:#626b38">
<div class="a" style="left:0;top:0;width:100%;height:100%;background:radial-gradient(circle at 24% 24%,#8aa544 0,#66783a 22%,transparent 42%),radial-gradient(circle at 74% 22%,#93b04c 0,#667a38 22%,transparent 42%),radial-gradient(circle at 90% 56%,#a3a24e 0,transparent 30%),radial-gradient(circle at 8% 58%,#6f8c3a 0,transparent 28%),radial-gradient(circle at 50% 6%,#3f4727 0,transparent 26%)"></div>
<div class="a" style="left:21%;top:22%;width:38%;height:60%;border-radius:45%;background:#1f1513"></div>
<div class="a" style="left:46%;top:32%;width:18%;height:25%;border-radius:50%;background:#9a664a"></div>
<div class="a" style="left:12%;top:68%;width:76%;height:40%;border-radius:45% 45% 0 0;background:linear-gradient(90deg,#8db4e6 0,#a9b6e2 50%,#dca6cd 90%)"></div>
</div><div class="t" style="left:1245.2px;top:561px;font-size:14px;line-height:20px;font-weight:normal;color:#172b4d;letter-spacing:-0.5px;">24.01.24</div><div class="a" style="left:1331px;top:555px;width:32px;height:32px;background:#f1f2f4;border-radius:3px"></div><div class="a" style="left:1367px;top:555px;width:32px;height:32px;background:#f1f2f4;border-radius:3px"></div><div class="a" style="left:1403px;top:555px;width:32px;height:32px;background:#f1f2f4;border-radius:3px"></div><div class="a" style="left:1439px;top:555px;width:32px;height:32px;background:#f1f2f4;border-radius:3px"></div><div class="a" style="left:1475px;top:555px;width:32px;height:32px;background:#f1f2f4;border-radius:3px"></div><svg style="left:1340.500px;top:562.5px" width="16" height="17" viewBox="0 0 16 17"><path d="M1.200 1.200L14.200 8.500L1.200 15.800Z" fill="#57d9a3" stroke="#57d9a3" stroke-width="1.600" stroke-linejoin="round"/></svg><svg style="left:1375px;top:561px" width="18" height="20" viewBox="0 0 18 20" fill="none" stroke="#172b4d" stroke-width="1.700"><path d="M3.500 14.500H2.500C1.700 14.500 1.300 14.100 1.300 13.300V2.300C1.300 1.500 1.700 1.100 2.500 1.100H11"/><rect x="5" y="4.800" width="10" height="13.500" rx="1.200"/></svg><svg style="left:1413px;top:564.7px" width="12.5" height="12.5" viewBox="0 0 17 18"><path d="M5.500 0.300H11.500L12.300 1.600H16.500V3.800H0.500V1.600H4.700Z" fill="#172b4d"/><path d="M1.800 5H15.200L14 16.300C13.900 17.300 13.300 17.800 12.300 17.800H4.700C3.700 17.800 3.100 17.300 3 16.300Z" fill="#172b4d"/></svg><svg style="left:1445.500px;top:561px" width="19" height="20" viewBox="0 0 19 20"><path d="M14.500 4L4.500 10L14.500 16" fill="none" stroke="#172b4d" stroke-width="1.600"/><circle cx="15" cy="3.800" r="2.300" fill="#f1f2f4" stroke="#172b4d" stroke-width="1.600"/><circle cx="4" cy="10" r="2.300" fill="#f1f2f4" stroke="#172b4d" stroke-width="1.600"/><circle cx="15" cy="16.200" r="2.300" fill="#f1f2f4" stroke="#172b4d" stroke-width="1.600"/></svg><svg style="left:1484px;top:566px" width="14" height="10" viewBox="0 0 14 10"><path d="M0 1H14M0 5H14M0 9H14" stroke="#172b4d" stroke-width="2"/></svg><svg style="left:314px;top:602px" width="16" height="16" viewBox="0 0 16 16"><circle cx="8" cy="8" r="6.300" fill="none" stroke="#172b4d" stroke-width="1.500"/><path d="M8 7.300V11" stroke="#172b4d" stroke-width="1.700"/><circle cx="8" cy="5" r="1" fill="#172b4d"/></svg><svg style="left:337px;top:600.5px" width="18" height="18" viewBox="0 0 18 18"><polygon points="9.00,2.20 11.29,6.54 16.13,7.38 12.71,10.91 13.41,15.77 9.00,13.60 4.59,15.77 5.29,10.91 1.87,7.38 6.71,6.54" fill="#ffab00" stroke="#ffab00" stroke-width="1.8" stroke-linejoin="round"/></svg><div class="t" style="left:380px;top:601px;font-size:14px;line-height:20px;font-weight:normal;color:#0c66e4;letter-spacing:0.086px;-webkit-text-stroke:0.250px #0c66e4;">Daily QA Status Report Template</div><div class="a" style="left:816px;top:601px;width:27.7px;height:20px;background:#ffd5d2;border-radius:3px"></div><div class="t" style="left:820.4px;top:601px;font-size:13px;line-height:19px;font-weight:normal;color:#ae2e24;letter-spacing:-0.197px;">QA</div><div class="a" style="left:998px;top:604px;width:50px;height:16px;background:#1f845a;border-radius:3px"></div><div class="t" style="left:1002px;top:604px;font-size:11px;line-height:16px;font-weight:bold;color:#fff;letter-spacing:-0.891px;">GLOBAL</div><div class="a" style="left:1185px;top:598px;width:24px;height:24px;border-radius:50%;overflow:hidden;background:#626b38">
<div class="a" style="left:0;top:0;width:100%;height:100%;background:radial-gradient(circle at 24% 24%,#8aa544 0,#66783a 22%,transparent 42%),radial-gradient(circle at 74% 22%,#93b04c 0,#667a38 22%,transparent 42%),radial-gradient(circle at 90% 56%,#a3a24e 0,transparent 30%),radial-gradient(circle at 8% 58%,#6f8c3a 0,transparent 28%),radial-gradient(circle at 50% 6%,#3f4727 0,transparent 26%)"></div>
<div class="a" style="left:21%;top:22%;width:38%;height:60%;border-radius:45%;background:#1f1513"></div>
<div class="a" style="left:46%;top:32%;width:18%;height:25%;border-radius:50%;background:#9a664a"></div>
<div class="a" style="left:12%;top:68%;width:76%;height:40%;border-radius:45% 45% 0 0;background:linear-gradient(90deg,#8db4e6 0,#a9b6e2 50%,#dca6cd 90%)"></div>
</div><div class="t" style="left:1245.2px;top:601px;font-size:14px;line-height:20px;font-weight:normal;color:#172b4d;letter-spacing:-0.5px;">24.01.24</div><div class="a" style="left:1331px;top:595px;width:32px;height:32px;background:#f1f2f4;border-radius:3px"></div><div class="a" style="left:1367px;top:595px;width:32px;height:32px;background:#f1f2f4;border-radius:3px"></div><div class="a" style="left:1403px;top:595px;width:32px;height:32px;background:#f1f2f4;border-radius:3px"></div><div class="a" style="left:1439px;top:595px;width:32px;height:32px;background:#f1f2f4;border-radius:3px"></div><div class="a" style="left:1475px;top:595px;width:32px;height:32px;background:#f1f2f4;border-radius:3px"></div><svg style="left:1340.500px;top:602.5px" width="16" height="17" viewBox="0 0 16 17"><path d="M1.200 1.200L14.200 8.500L1.200 15.800Z" fill="#57d9a3" stroke="#57d9a3" stroke-width="1.600" stroke-linejoin="round"/></svg><svg style="left:1375px;top:601px" width="18" height="20" viewBox="0 0 18 20" fill="none" stroke="#172b4d" stroke-width="1.700"><path d="M3.500 14.500H2.500C1.700 14.500 1.300 14.100 1.300 13.300V2.300C1.300 1.500 1.700 1.100 2.500 1.100H11"/><rect x="5" y="4.800" width="10" height="13.500" rx="1.200"/></svg><svg style="left:1413px;top:604.7px" width="12.5" height="12.5" viewBox="0 0 17 18"><path d="M5.500 0.300H11.500L12.300 1.600H16.500V3.800H0.500V1.600H4.700Z" fill="#172b4d"/><path d="M1.800 5H15.200L14 16.300C13.900 17.300 13.300 17.800 12.300 17.800H4.700C3.700 17.800 3.100 17.300 3 16.300Z" fill="#172b4d"/></svg><svg style="left:1445.500px;top:601px" width="19" height="20" viewBox="0 0 19 20"><path d="M14.500 4L4.500 10L14.500 16" fill="none" stroke="#172b4d" stroke-width="1.600"/><circle cx="15" cy="3.800" r="2.300" fill="#f1f2f4" stroke="#172b4d" stroke-width="1.600"/><circle cx="4" cy="10" r="2.300" fill="#f1f2f4" stroke="#172b4d" stroke-width="1.600"/><circle cx="15" cy="16.200" r="2.300" fill="#f1f2f4" stroke="#172b4d" stroke-width="1.600"/></svg><svg style="left:1484px;top:606px" width="14" height="10" viewBox="0 0 14 10"><path d="M0 1H14M0 5H14M0 9H14" stroke="#172b4d" stroke-width="2"/></svg><svg style="left:314px;top:642px" width="16" height="16" viewBox="0 0 16 16"><circle cx="8" cy="8" r="6.300" fill="none" stroke="#172b4d" stroke-width="1.500"/><path d="M8 7.300V11" stroke="#172b4d" stroke-width="1.700"/><circle cx="8" cy="5" r="1" fill="#172b4d"/></svg><svg style="left:337px;top:640.5px" width="18" height="18" viewBox="0 0 18 18"><polygon points="9.00,2.10 11.50,6.26 16.23,7.35 13.05,11.02 13.47,15.85 9.00,13.96 4.53,15.85 4.95,11.02 1.77,7.35 6.50,6.26" fill="none" stroke="#c6c6c6" stroke-width="1.8" stroke-linejoin="round"/></svg><div class="t" style="left:380px;top:641px;font-size:14px;line-height:20px;font-weight:normal;color:#0c66e4;letter-spacing:0.152px;-webkit-text-stroke:0.250px #0c66e4;">Employee Onboarding Welcome Letter</div><div class="a" style="left:816px;top:641px;width:27px;height:20px;background:#fedec8;border-radius:3px"></div><div class="t" style="left:820.3px;top:641px;font-size:13px;line-height:19px;font-weight:normal;color:#8a4b12;letter-spacing:-0.481px;">HR</div><div class="a" style="left:998px;top:644px;width:50px;height:16px;background:#1f845a;border-radius:3px"></div><div class="t" style="left:1002px;top:644px;font-size:11px;line-height:16px;font-weight:bold;color:#fff;letter-spacing:-0.891px;">GLOBAL</div><div class="a" style="left:1185px;top:638px;width:24px;height:24px;border-radius:50%;overflow:hidden;background:#626b38">
<div class="a" style="left:0;top:0;width:100%;height:100%;background:radial-gradient(circle at 24% 24%,#8aa544 0,#66783a 22%,transparent 42%),radial-gradient(circle at 74% 22%,#93b04c 0,#667a38 22%,transparent 42%),radial-gradient(circle at 90% 56%,#a3a24e 0,transparent 30%),radial-gradient(circle at 8% 58%,#6f8c3a 0,transparent 28%),radial-gradient(circle at 50% 6%,#3f4727 0,transparent 26%)"></div>
<div class="a" style="left:21%;top:22%;width:38%;height:60%;border-radius:45%;background:#1f1513"></div>
<div class="a" style="left:46%;top:32%;width:18%;height:25%;border-radius:50%;background:#9a664a"></div>
<div class="a" style="left:12%;top:68%;width:76%;height:40%;border-radius:45% 45% 0 0;background:linear-gradient(90deg,#8db4e6 0,#a9b6e2 50%,#dca6cd 90%)"></div>
</div><div class="t" style="left:1245.2px;top:641px;font-size:14px;line-height:20px;font-weight:normal;color:#172b4d;letter-spacing:-0.5px;">24.01.24</div><div class="a" style="left:1331px;top:635px;width:32px;height:32px;background:#f1f2f4;border-radius:3px"></div><div class="a" style="left:1367px;top:635px;width:32px;height:32px;background:#f1f2f4;border-radius:3px"></div><div class="a" style="left:1403px;top:635px;width:32px;height:32px;background:#f1f2f4;border-radius:3px"></div><div class="a" style="left:1439px;top:635px;width:32px;height:32px;background:#f1f2f4;border-radius:3px"></div><div class="a" style="left:1475px;top:635px;width:32px;height:32px;background:#f1f2f4;border-radius:3px"></div><svg style="left:1340.500px;top:642.5px" width="16" height="17" viewBox="0 0 16 17"><path d="M1.200 1.200L14.200 8.500L1.200 15.800Z" fill="#57d9a3" stroke="#57d9a3" stroke-width="1.600" stroke-linejoin="round"/></svg><svg style="left:1375px;top:641px" width="18" height="20" viewBox="0 0 18 20" fill="none" stroke="#172b4d" stroke-width="1.700"><path d="M3.500 14.500H2.500C1.700 14.500 1.300 14.100 1.300 13.300V2.300C1.300 1.500 1.700 1.100 2.500 1.100H11"/><rect x="5" y="4.800" width="10" height="13.500" rx="1.200"/></svg><svg style="left:1413px;top:644.7px" width="12.5" height="12.5" viewBox="0 0 17 18"><path d="M5.500 0.300H11.500L12.300 1.600H16.500V3.800H0.500V1.600H4.700Z" fill="#172b4d"/><path d="M1.800 5H15.200L14 16.300C13.900 17.300 13.300 17.800 12.300 17.800H4.700C3.700 17.800 3.100 17.300 3 16.300Z" fill="#172b4d"/></svg><svg style="left:1445.500px;top:641px" width="19" height="20" viewBox="0 0 19 20"><path d="M14.500 4L4.500 10L14.500 16" fill="none" stroke="#172b4d" stroke-width="1.600"/><circle cx="15" cy="3.800" r="2.300" fill="#f1f2f4" stroke="#172b4d" stroke-width="1.600"/><circle cx="4" cy="10" r="2.300" fill="#f1f2f4" stroke="#172b4d" stroke-width="1.600"/><circle cx="15" cy="16.200" r="2.300" fill="#f1f2f4" stroke="#172b4d" stroke-width="1.600"/></svg><svg style="left:1484px;top:646px" width="14" height="10" viewBox="0 0 14 10"><path d="M0 1H14M0 5H14M0 9H14" stroke="#172b4d" stroke-width="2"/></svg><svg style="left:314px;top:682px" width="16" height="16" viewBox="0 0 16 16"><circle cx="8" cy="8" r="6.300" fill="none" stroke="#172b4d" stroke-width="1.500"/><path d="M8 7.300V11" stroke="#172b4d" stroke-width="1.700"/><circle cx="8" cy="5" r="1" fill="#172b4d"/></svg><svg style="left:337px;top:680.5px" width="18" height="18" viewBox="0 0 18 18"><polygon points="9.00,2.10 11.50,6.26 16.23,7.35 13.05,11.02 13.47,15.85 9.00,13.96 4.53,15.85 4.95,11.02 1.77,7.35 6.50,6.26" fill="none" stroke="#c6c6c6" stroke-width="1.8" stroke-linejoin="round"/></svg><div class="t" style="left:380px;top:681px;font-size:14px;line-height:20px;font-weight:normal;color:#0c66e4;letter-spacing:0.042px;-webkit-text-stroke:0.250px #0c66e4;">Test Environment Request Template</div><div class="a" style="left:816px;top:681px;width:27.7px;height:20px;background:#ffd5d2;border-radius:3px"></div><div class="t" style="left:820.4px;top:681px;font-size:13px;line-height:19px;font-weight:normal;color:#ae2e24;letter-spacing:-0.197px;">QA</div><div class="a" style="left:998px;top:684px;width:50px;height:16px;background:#1f845a;border-radius:3px"></div><div class="t" style="left:1002px;top:684px;font-size:11px;line-height:16px;font-weight:bold;color:#fff;letter-spacing:-0.891px;">GLOBAL</div><div class="a" style="left:1185px;top:678px;width:24px;height:24px;border-radius:50%;overflow:hidden;background:#626b38">
<div class="a" style="left:0;top:0;width:100%;height:100%;background:radial-gradient(circle at 24% 24%,#8aa544 0,#66783a 22%,transparent 42%),radial-gradient(circle at 74% 22%,#93b04c 0,#667a38 22%,transparent 42%),radial-gradient(circle at 90% 56%,#a3a24e 0,transparent 30%),radial-gradient(circle at 8% 58%,#6f8c3a 0,transparent 28%),radial-gradient(circle at 50% 6%,#3f4727 0,transparent 26%)"></div>
<div class="a" style="left:21%;top:22%;width:38%;height:60%;border-radius:45%;background:#1f1513"></div>
<div class="a" style="left:46%;top:32%;width:18%;height:25%;border-radius:50%;background:#9a664a"></div>
<div class="a" style="left:12%;top:68%;width:76%;height:40%;border-radius:45% 45% 0 0;background:linear-gradient(90deg,#8db4e6 0,#a9b6e2 50%,#dca6cd 90%)"></div>
</div><div class="t" style="left:1245.2px;top:681px;font-size:14px;line-height:20px;font-weight:normal;color:#172b4d;letter-spacing:-0.5px;">24.01.24</div><div class="a" style="left:1331px;top:675px;width:32px;height:32px;background:#f1f2f4;border-radius:3px"></div><div class="a" style="left:1367px;top:675px;width:32px;height:32px;background:#f1f2f4;border-radius:3px"></div><div class="a" style="left:1403px;top:675px;width:32px;height:32px;background:#f1f2f4;border-radius:3px"></div><div class="a" style="left:1439px;top:675px;width:32px;height:32px;background:#f1f2f4;border-radius:3px"></div><div class="a" style="left:1475px;top:675px;width:32px;height:32px;background:#f1f2f4;border-radius:3px"></div><svg style="left:1340.500px;top:682.5px" width="16" height="17" viewBox="0 0 16 17"><path d="M1.200 1.200L14.200 8.500L1.200 15.800Z" fill="#57d9a3" stroke="#57d9a3" stroke-width="1.600" stroke-linejoin="round"/></svg><svg style="left:1375px;top:681px" width="18" height="20" viewBox="0 0 18 20" fill="none" stroke="#172b4d" stroke-width="1.700"><path d="M3.500 14.500H2.500C1.700 14.500 1.300 14.100 1.300 13.300V2.300C1.300 1.500 1.700 1.100 2.500 1.100H11"/><rect x="5" y="4.800" width="10" height="13.500" rx="1.200"/></svg><svg style="left:1413px;top:684.7px" width="12.5" height="12.5" viewBox="0 0 17 18"><path d="M5.500 0.300H11.500L12.300 1.600H16.500V3.800H0.500V1.600H4.700Z" fill="#172b4d"/><path d="M1.800 5H15.200L14 16.300C13.900 17.300 13.300 17.800 12.300 17.800H4.700C3.700 17.800 3.100 17.300 3 16.300Z" fill="#172b4d"/></svg><svg style="left:1445.500px;top:681px" width="19" height="20" viewBox="0 0 19 20"><path d="M14.500 4L4.500 10L14.500 16" fill="none" stroke="#172b4d" stroke-width="1.600"/><circle cx="15" cy="3.800" r="2.300" fill="#f1f2f4" stroke="#172b4d" stroke-width="1.600"/><circle cx="4" cy="10" r="2.300" fill="#f1f2f4" stroke="#172b4d" stroke-width="1.600"/><circle cx="15" cy="16.200" r="2.300" fill="#f1f2f4" stroke="#172b4d" stroke-width="1.600"/></svg><svg style="left:1484px;top:686px" width="14" height="10" viewBox="0 0 14 10"><path d="M0 1H14M0 5H14M0 9H14" stroke="#172b4d" stroke-width="2"/></svg>
</body></html>
